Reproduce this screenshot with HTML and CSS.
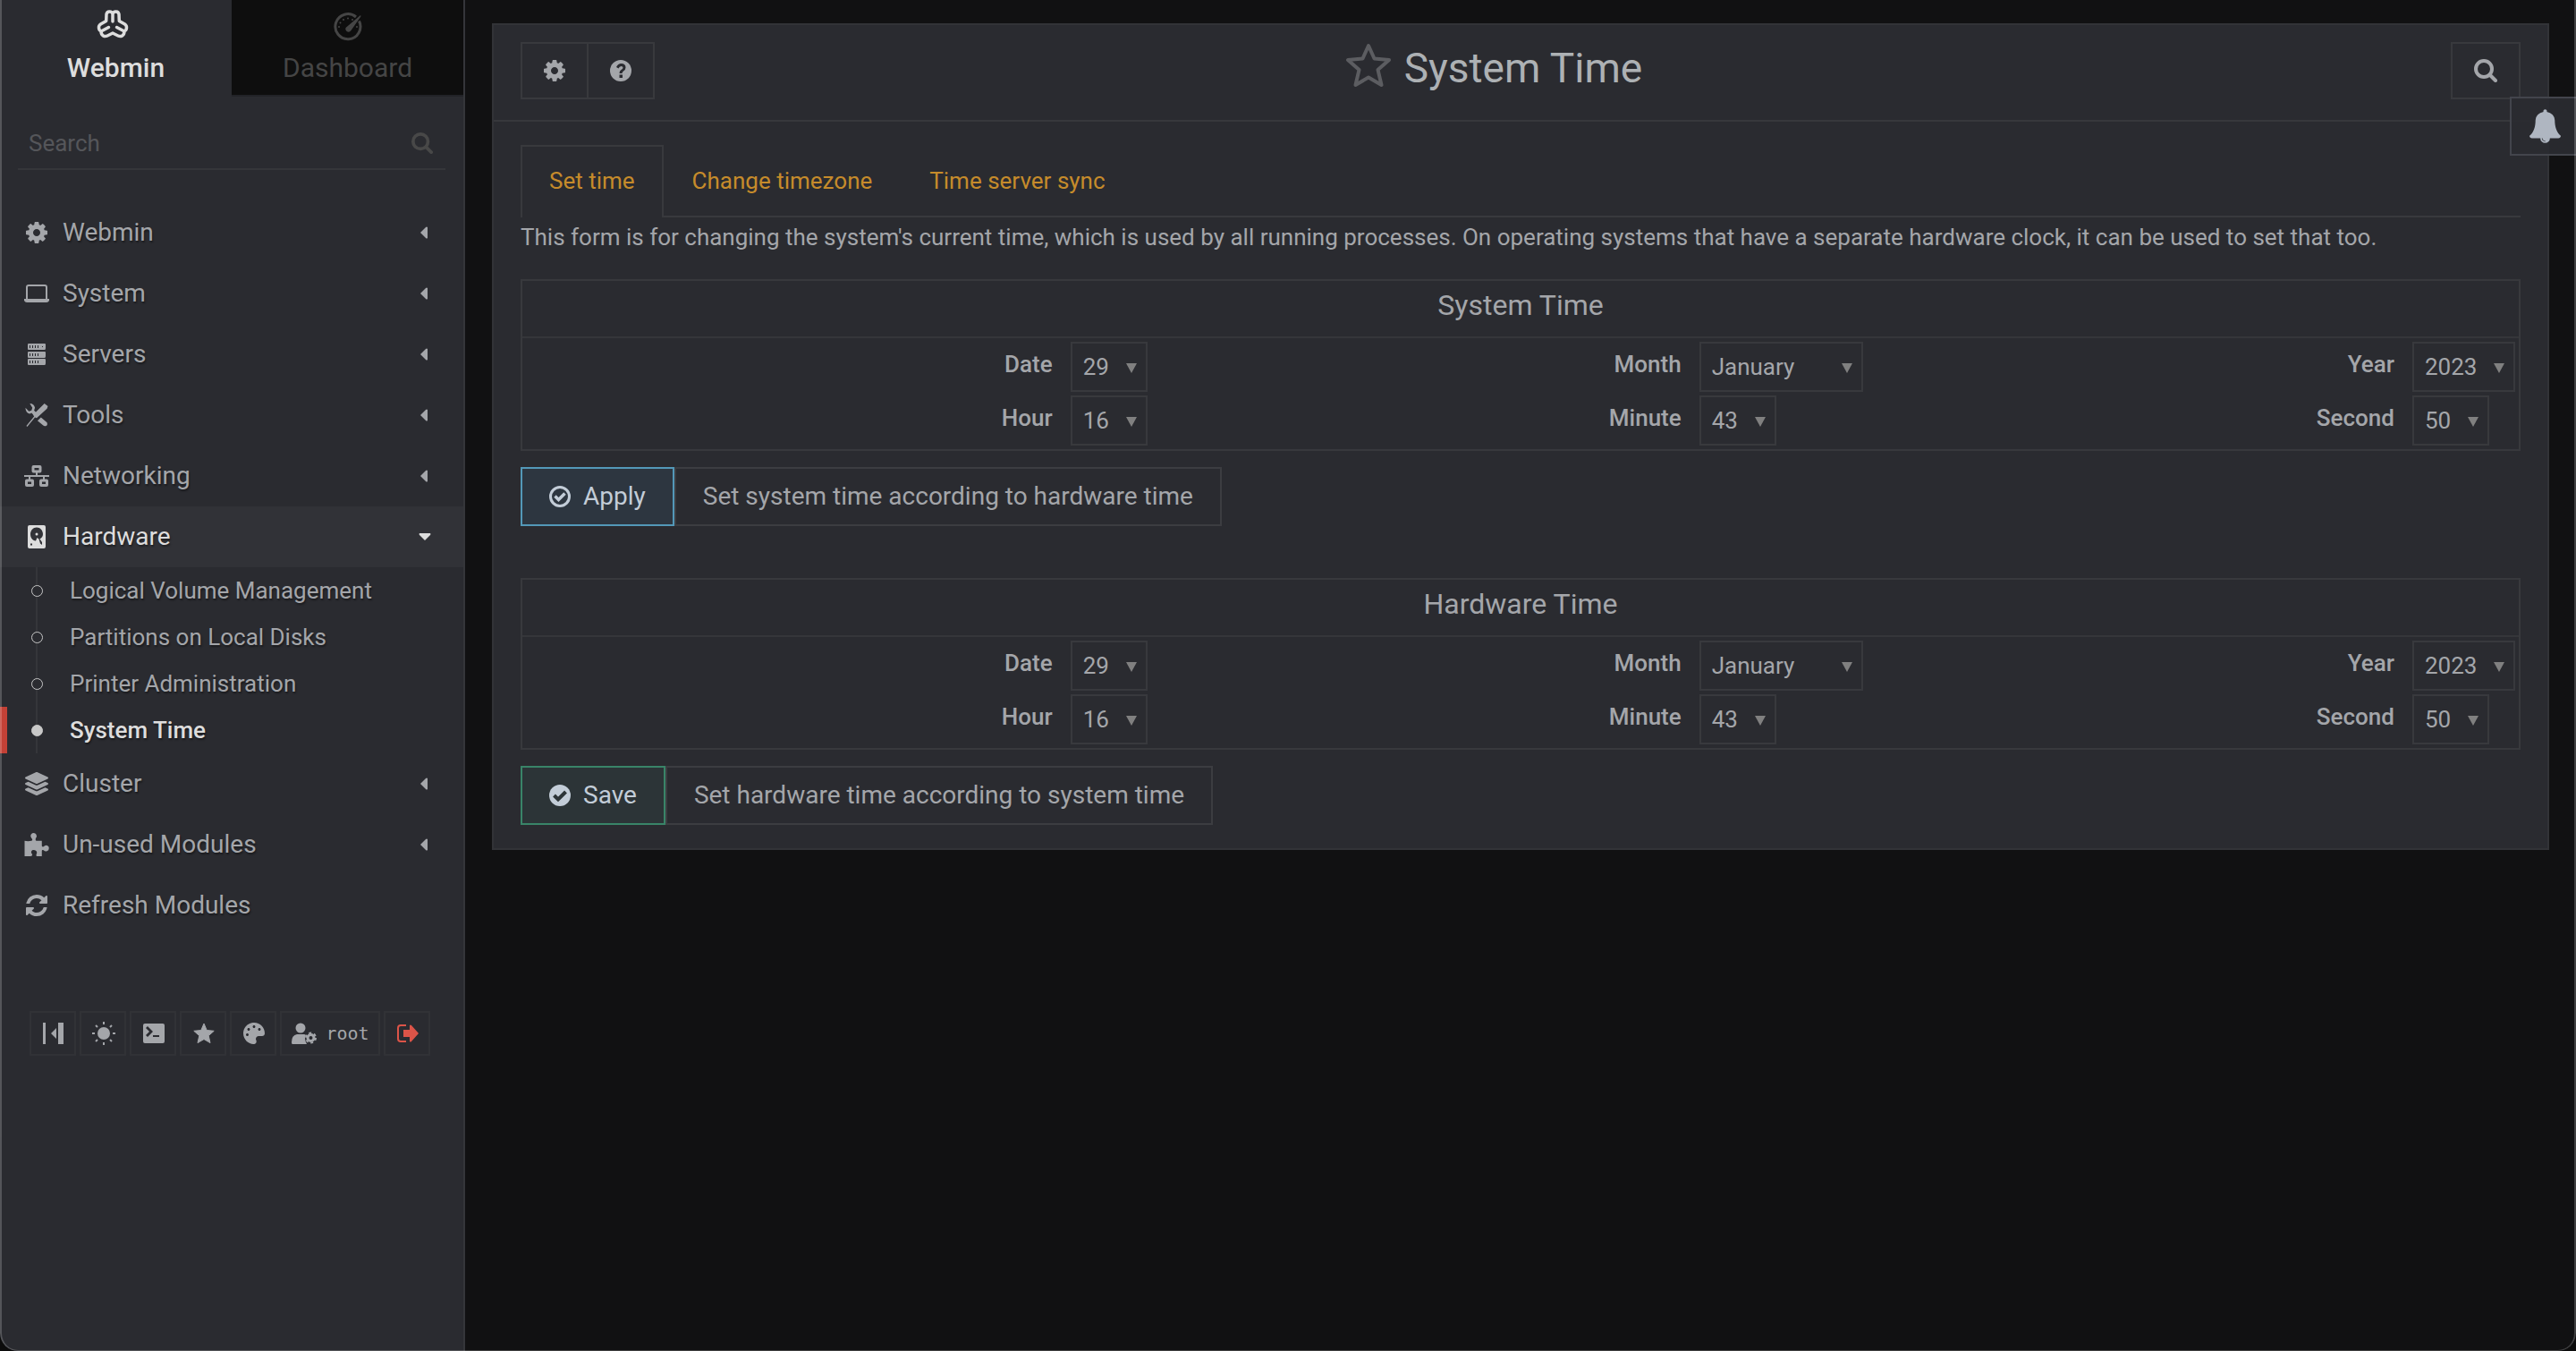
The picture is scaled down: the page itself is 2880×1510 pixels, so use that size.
FILE: index.html
```html
<!DOCTYPE html>
<html lang="en">
<head>
<meta charset="utf-8">
<title>System Time</title>
<link rel="stylesheet" href="styles.css">
</head>
<body>
<svg class="sprite" aria-hidden="true">
  <symbol id="cog" viewBox="0 0 1536 1536"><path d="M1024 768q0-106-75-181t-181-75-181 75-75 181 75 181 181 75 181-75 75-181zm512-109v222q0 12-8 23t-20 13l-185 28q-19 54-39 91 35 50 107 138 10 12 10 25t-9 23q-27 37-99 108t-94 71q-12 0-26-9l-138-108q-44 23-91 38-16 136-29 186-7 28-36 28H657q-14 0-24.500-8.500T621 1506l-28-184q-49-16-90-37l-141 107q-10 9-25 9-14 0-25-11-126-114-165-168-7-10-7-23 0-12 8-23 15-21 51-66.500t54-70.500q-27-50-41-99L29 913q-13-2-21-12.500T0 877V655q0-12 8-23t19-13l186-28q14-46 39-92-40-57-107-138-10-12-10-24 0-10 9-23 26-36 98.500-107.500T337 135q13 0 26 10l138 107q44-23 91-38 16-136 29-186 7-28 36-28h222q14 0 24.500 8.500T915 30l28 184q49 16 90 37l142-107q9-9 24-9 13 0 25 10 129 119 165 170 7 8 7 22 0 12-8 23-15 21-51 66.500t-54 70.500q26 50 41 98l183 28q13 2 21 12.500t8 23.500z"/></symbol>
  <symbol id="refresh" viewBox="0 0 1536 1536"><path d="M1511 928q0 5-1 7-64 268-268 434.500T764 1536q-146 0-282.500-55T238 1324l-129 129q-19 19-45 19t-45-19-19-45V960q0-26 19-45t45-19h448q26 0 45 19t19 45-19 45l-137 137q71 66 161 102t187 36q134 0 250-65t186-179q11-17 53-117 8-23 30-23h192q13 0 22.500 9.500t9.500 22.500zm25-800v448q0 26-19 45t-45 19h-448q-26 0-45-19t-19-45 19-45l138-138Q969 256 768 256q-134 0-250 65T332 500q-11 17-53 117-8 23-30 23H50q-13 0-22.500-9.500T18 608v-7q65-268 270-434.500T768 0q146 0 284 55.500T1297 212l130-129q19-19 45-19t45 19 19 45z"/></symbol>
  <symbol id="magnifier" viewBox="0 0 26 26"><g fill="none" stroke="currentColor"><circle cx="11" cy="11" r="9" stroke-width="4"/><path d="M18 18l6 6" stroke-width="4" stroke-linecap="round"/></g></symbol>
  <symbol id="laptop" viewBox="0 0 28 20"><path fill="none" stroke="currentColor" stroke-width="2" d="M3 16V3q0-2 2-2h18q2 0 2 2v13"/><path d="M0 16h28v2q-1 2-3 2H3q-2 0-3-2z"/></symbol>
  <symbol id="servers" viewBox="0 0 20 24"><path fill-rule="evenodd" d="M1 0h18q1 0 1 1v4q0 2-1 2H1Q0 7 0 6V1q0-1 1-1zm1 2v3h1V2zm3 0v3h1V2zm3 0v3h1V2zm3 0v3h1V2zm5 1v1h1V3zM1 9h18q1 0 1 1v4q0 2-1 2H1q-1 0-1-1v-5q0-1 1-1zm1 2v3h1v-3zm3 0v3h1v-3zm3 0v3h1v-3zm3 0v3h1v-3zM1 17h18q1 0 1 1v4q0 2-1 2H1q-1 0-1-1v-5q0-1 1-1zm1 2v3h1v-3zm3 0v3h1v-3zm3 0v3h1v-3zm3 0v3h1v-3z"/></symbol>
  <symbol id="tools" viewBox="0 0 26 27"><path d="M22 0l4 3-1 3L13 17l-2-1L2 27l-1-1 9-11-1-2z"/><path d="M14 20l4-4 7 6q1 3-1 4-2 1-4-1z"/><path d="M5 0q5 0 6 5l-1 3 4 4-3 3-4-4-2 1Q0 11 0 5l4 4 3-1 1-3z"/></symbol>
  <symbol id="network" viewBox="0 0 28 24"><path fill="none" stroke="currentColor" stroke-width="2" d="M0 12h28M14 7v5M6 12v4M22 12v4"/><g fill="none" stroke="currentColor" stroke-width="3"><rect x="10" y="1.500" width="8" height="5.500" rx=".5"/><rect x="2.500" y="17" width="7" height="5.500" rx=".5"/><rect x="18.500" y="17" width="7" height="5.500" rx=".5"/></g></symbol>
  <symbol id="disk" viewBox="0 0 20 26"><path fill-rule="evenodd" d="M2 0h16q2 0 2 2v22q0 2-2 2H2q-2 0-2-2V2Q0 0 2 0zm8 2.500C6 2.500 3 6 3 10s2 7 6 7.500L10.500 14l2 1.500 1.500 5 2 1.500v-3l-2.500-3.500C16 14 17 12 17 10c0-4-3-7.500-7-7.500zM3 20.500v2h2v-2z"/><circle cx="10" cy="10" r="1.500"/></symbol>
  <symbol id="layers" viewBox="0 0 512 512"><path d="M12.410 148.020l232.940 105.670c6.800 3.090 14.490 3.090 21.290 0l232.940-105.670c16.550-7.510 16.550-32.520 0-40.030L266.650 2.310a25.607 25.607 0 0 0-21.290 0L12.410 107.980c-16.550 7.510-16.550 32.530 0 40.040zm487.180 88.280l-58.090-26.330-161.640 73.270c-7.560 3.430-15.590 5.170-23.860 5.170s-16.290-1.740-23.860-5.170L70.510 209.970l-58.100 26.330c-16.550 7.500-16.550 32.500 0 40l232.940 105.590c6.800 3.080 14.490 3.080 21.290 0L499.590 276.300c16.550-7.500 16.550-32.500 0-40zm0 127.800l-57.870-26.230-161.860 73.370c-7.560 3.430-15.590 5.170-23.860 5.170s-16.290-1.740-23.860-5.170L70.290 337.870 12.410 364.100c-16.550 7.500-16.550 32.500 0 40l232.940 105.590c6.800 3.080 14.490 3.080 21.290 0L499.590 404.100c16.550-7.500 16.550-32.500 0-40z"/></symbol>
  <symbol id="puzzle" viewBox="0 0 28 27"><path d="M0 9q4 1 8 0 2-1 0-3-2-3 0-5 2-2 5 0 2 3 0 5-1 3 1 3h6v6q1 2 3 0 3-2 5 1 1 4-2 5-2 1-4-1-2-1-2 1v6h-6q-1-1 0-3 1-3-2-4-3-1-4 1-1 2 1 4 0 2-2 2H0z"/></symbol>
  <symbol id="star" viewBox="0 0 24 24"><path stroke="currentColor" stroke-width="1" stroke-linejoin="round" d="M12 1l3.200 7.500 8 .8-6 5.300 1.800 8L12 18.500 5 22.600l1.800-8-6-5.300 8-.8z"/></symbol>
  <symbol id="star-open" viewBox="0 0 52 52"><path fill="none" stroke="currentColor" stroke-width="4" stroke-linejoin="round" d="M26 4l6.500 14.500L49 20 36.500 31l4 17L26 39.500 11.500 48l4-17L3 20l16.500-1.500z"/></symbol>
  <symbol id="sun" viewBox="0 0 26 26"><circle cx="13" cy="13" r="7"/><path fill="none" stroke="currentColor" stroke-width="2" d="M13 0v3M13 23v3M0 13h3M23 13h3M4 4l2 2M20 20l2 2M4 22l2-2M20 6l2-2"/></symbol>
  <symbol id="terminal" viewBox="0 0 24 22"><path fill-rule="evenodd" d="M2 0h20q2 0 2 2v18q0 2-2 2H2q-2 0-2-2V2Q0 0 2 0zm1 5l4 4-4 4 2 2 6-6-6-6zm8 8v2h7v-2z"/></symbol>
  <symbol id="palette" viewBox="0 0 512 512"><path d="M204.300 5C104.900 24.400 24.800 104.300 5.200 203.400c-37 187 131.700 326.400 258.800 306.700 41.200-6.400 61.400-54.600 42.500-91.700-23.100-45.400 9.900-98.400 60.900-98.400h79.700c35.800 0 64.800-29.600 64.900-65.300C511.500 97.100 368.100-26.900 204.300 5zM96 320c-17.700 0-32-14.300-32-32s14.300-32 32-32 32 14.300 32 32-14.300 32-32 32zm32-128c-17.700 0-32-14.300-32-32s14.300-32 32-32 32 14.300 32 32-14.300 32-32 32zm128-64c-17.700 0-32-14.300-32-32s14.300-32 32-32 32 14.300 32 32-14.300 32-32 32zm128 64c-17.700 0-32-14.300-32-32s14.300-32 32-32 32 14.300 32 32-14.300 32-32 32z"/></symbol>
  <symbol id="collapse" viewBox="0 0 24 24"><path d="M0 0h3v24H0zM17 0h6v24h-6zM15 6v12l-6-6z"/></symbol>
  <symbol id="user-cog" viewBox="0 0 28 24"><circle cx="10" cy="6" r="5.500"/><path d="M6 13h8q1 0 2 1-1 2-1 4t2 6H1q-1 0-1-2 0-8 6-9z"/><circle cx="21.500" cy="17" r="3.500" fill="none" stroke="currentColor" stroke-width="3"/><circle cx="21.500" cy="17" r="5.500" fill="none" stroke="currentColor" stroke-width="2" stroke-dasharray="2.880 2.880"/></symbol>
  <symbol id="logout" viewBox="0 0 24 20"><path fill="none" stroke="currentColor" stroke-width="2" d="M10 1H4Q1 1 1 4v12q0 3 3 3h6"/><path d="M7 6h7V1q1-1 2 0l8 9-8 9q-1 1-2 0v-5H7z"/></symbol>
  <symbol id="help" viewBox="0 0 24 24"><circle cx="12" cy="12" r="12"/><path class="cut" d="M7 8q2-4 5.500-4 5 0 5 4.500 0 2.500-2.500 4-1.500 1-1.500 2.500h-3q0-3 2-4 2-1 2-2.500 0-1.500-2-1.500T9.500 9.500zM10.500 16.500h3.500V20h-3.500z"/></symbol>
  <symbol id="check-ring" viewBox="0 0 24 24"><circle cx="12" cy="12" r="10.500" fill="none" stroke="currentColor" stroke-width="3"/><path fill="none" stroke="currentColor" stroke-width="3.500" d="M6.500 11.500l4 4 7-7"/></symbol>
  <symbol id="check-disc" viewBox="0 0 24 24"><circle cx="12" cy="12" r="12"/><path class="cut-line" d="M5.500 12l4.500 4.500 8.500-8.500"/></symbol>
  <symbol id="bell" viewBox="64 0 1664 1792"><path d="M912 1696q0-16-16-16-59 0-101.500-42.500T752 1536q0-16-16-16t-16 16q0 73 51.500 124.500T896 1712q16 0 16-16zm816-288q0 52-38 90t-90 38h-448q0 106-75 181t-181 75-181-75-75-181H192q-52 0-90-38t-38-90q50-42 91-88t85-119.500 74.500-158.500 50-206T384 576q0-152 117-282.500T808 135q-8-19-8-39 0-40 28-68t68-28 68 28 28 68q0 20-8 39 190 28 307 158.500T1408 576q0 139 19.500 260t50 206 74.500 158.500 85 119.500 91 88z"/></symbol>
  <symbol id="webmin" viewBox="0 0 36 34"><path fill="none" stroke="currentColor" stroke-width="3.500" stroke-linejoin="round" stroke-linecap="round" d="M18 5.500C17 2 11.500 2 11 6l-.3 7.500L4.500 17C1.500 19 2 23.500 5 25c0 5 4 6.500 7 5l6-3 6 3c3 1.500 7 0 7-5 3-1.500 3.500-6 .5-8l-6.200-3.500L25 6c-.5-4-6-4-7-.5zM18 6v8M5 25l8.500-4.500M31 25l-8.500-4.500"/></symbol>
  <symbol id="gauge" viewBox="0 0 32 32"><g fill="none" stroke="currentColor" stroke-width="3"><path d="M25 5A14 14 0 1 0 28.500 9.500"/></g><path d="M30 3q1 1 0 2L19.500 20q-2 3-5 1-2-2-1-4z"/><g><circle cx="16" cy="6.500" r="1"/><circle cx="11" cy="8" r="1"/><circle cx="21" cy="8" r="1"/><circle cx="7.500" cy="11.500" r="1"/><circle cx="6" cy="16" r="1"/><circle cx="26" cy="16" r="1"/></g></symbol>
  <symbol id="caret-left" viewBox="0 0 8 14"><path d="M8 1v12q-1 1-2 0L0 7l6-6q1-1 2 0z"/></symbol>
  <symbol id="caret-down" viewBox="0 0 14 8"><path d="M1 0h12q1 1 0 2L7 8 1 2Q0 1 1 0z"/></symbol>
</svg>

<div class="app">
  <aside class="sidebar">
    <nav class="switch">
      <a class="switch-item is-active" href="#webmin-menu"><svg class="logo"><use href="#webmin"/></svg>Webmin</a>
      <a class="switch-item" href="#dashboard"><svg class="gauge"><use href="#gauge"/></svg>Dashboard</a>
    </nav>
    <div class="search">
      <input class="search-input" type="search" placeholder="Search" aria-label="Search">
      <svg class="search-icon"><use href="#magnifier"/></svg>
    </div>
    <ul class="menu">
      <li><a class="menu-link" href="#m1"><svg class="menu-icon"><use href="#cog"/></svg>Webmin<svg class="caret"><use href="#caret-left"/></svg></a></li>
      <li><a class="menu-link" href="#m2"><svg class="menu-icon"><use href="#laptop"/></svg>System<svg class="caret"><use href="#caret-left"/></svg></a></li>
      <li><a class="menu-link" href="#m3"><svg class="menu-icon"><use href="#servers"/></svg>Servers<svg class="caret"><use href="#caret-left"/></svg></a></li>
      <li><a class="menu-link" href="#m4"><svg class="menu-icon tall"><use href="#tools"/></svg>Tools<svg class="caret"><use href="#caret-left"/></svg></a></li>
      <li><a class="menu-link" href="#m5"><svg class="menu-icon"><use href="#network"/></svg>Networking<svg class="caret"><use href="#caret-left"/></svg></a></li>
      <li><a class="menu-link is-open" href="#m6"><svg class="menu-icon tall"><use href="#disk"/></svg>Hardware<svg class="caret down"><use href="#caret-down"/></svg></a>
        <ul class="submenu">
          <li><a class="sub-link" href="#s1">Logical Volume Management</a></li>
          <li><a class="sub-link" href="#s2">Partitions on Local Disks</a></li>
          <li><a class="sub-link" href="#s3">Printer Administration</a></li>
          <li><a class="sub-link is-current" href="#s4">System Time</a></li>
        </ul>
      </li>
      <li><a class="menu-link" href="#m7"><svg class="menu-icon tall"><use href="#layers"/></svg>Cluster<svg class="caret"><use href="#caret-left"/></svg></a></li>
      <li><a class="menu-link" href="#m8"><svg class="menu-icon tall"><use href="#puzzle"/></svg>Un-used Modules<svg class="caret"><use href="#caret-left"/></svg></a></li>
      <li><a class="menu-link" href="#m9"><svg class="menu-icon"><use href="#refresh"/></svg>Refresh Modules</a></li>
    </ul>
    <div class="tray">
      <button class="tray-btn" type="button" aria-label="Collapse menu"><svg class="icon"><use href="#collapse"/></svg></button>
      <button class="tray-btn" type="button" aria-label="Night mode"><svg class="icon big"><use href="#sun"/></svg></button>
      <button class="tray-btn" type="button" aria-label="Terminal"><svg class="icon"><use href="#terminal"/></svg></button>
      <button class="tray-btn" type="button" aria-label="Favorites"><svg class="icon"><use href="#star"/></svg></button>
      <button class="tray-btn" type="button" aria-label="Theme"><svg class="icon"><use href="#palette"/></svg></button>
      <button class="tray-btn user" type="button"><svg class="icon user-icon"><use href="#user-cog"/></svg>root</button>
      <button class="tray-btn exit" type="button" aria-label="Log out"><svg class="icon"><use href="#logout"/></svg></button>
    </div>
  </aside>

  <main class="content">
    <section class="panel">
      <header class="panel-head">
        <div class="btn-pair">
          <button class="head-btn" type="button" aria-label="Module config"><svg class="icon"><use href="#cog"/></svg></button>
          <button class="head-btn" type="button" aria-label="Help"><svg class="icon"><use href="#help"/></svg></button>
        </div>
        <h1 class="title"><svg class="title-star"><use href="#star-open"/></svg>System Time</h1>
        <button class="head-btn find" type="button" aria-label="Search"><svg class="icon big"><use href="#magnifier"/></svg></button>
      </header>
      <div class="panel-body">
        <nav class="tabs">
          <a class="tab is-active" href="#set-time">Set time</a>
          <a class="tab" href="#timezone">Change timezone</a>
          <a class="tab" href="#sync">Time server sync</a>
        </nav>
        <p class="intro">This form is for changing the system's current time, which is used by all running processes. On operating systems that have a separate hardware clock, it can be used to set that too.</p>

        <form class="clock">
          <table class="grid">
            <colgroup><col class="c1"><col class="c2"><col class="c3"><col class="c4"><col class="c5"><col class="c6"></colgroup>
            <thead><tr><th class="grid-title" colspan="6">System Time</th></tr></thead>
            <tbody>
              <tr>
                <td class="name"><label for="sd">Date</label></td><td class="value"><span class="pick"><select id="sd"><option>29</option></select></span></td>
                <td class="name"><label for="sm">Month</label></td><td class="value"><span class="pick"><select id="sm" class="month"><option>January</option></select></span></td>
                <td class="name"><label for="sy">Year</label></td><td class="value"><span class="pick"><select id="sy" class="year"><option>2023</option></select></span></td>
              </tr>
              <tr>
                <td class="name"><label for="sh">Hour</label></td><td class="value"><span class="pick"><select id="sh"><option>16</option></select></span></td>
                <td class="name"><label for="sn">Minute</label></td><td class="value"><span class="pick"><select id="sn"><option>43</option></select></span></td>
                <td class="name"><label for="ss">Second</label></td><td class="value"><span class="pick"><select id="ss"><option>50</option></select></span></td>
              </tr>
            </tbody>
          </table>
          <div class="actions">
            <button class="action apply" type="button"><svg class="icon"><use href="#check-ring"/></svg>Apply</button>
            <button class="action" type="button">Set system time according to hardware time</button>
          </div>
        </form>

        <form class="clock">
          <table class="grid">
            <colgroup><col class="c1"><col class="c2"><col class="c3"><col class="c4"><col class="c5"><col class="c6"></colgroup>
            <thead><tr><th class="grid-title" colspan="6">Hardware Time</th></tr></thead>
            <tbody>
              <tr>
                <td class="name"><label for="hd">Date</label></td><td class="value"><span class="pick"><select id="hd"><option>29</option></select></span></td>
                <td class="name"><label for="hm">Month</label></td><td class="value"><span class="pick"><select id="hm" class="month"><option>January</option></select></span></td>
                <td class="name"><label for="hy">Year</label></td><td class="value"><span class="pick"><select id="hy" class="year"><option>2023</option></select></span></td>
              </tr>
              <tr>
                <td class="name"><label for="hh">Hour</label></td><td class="value"><span class="pick"><select id="hh"><option>16</option></select></span></td>
                <td class="name"><label for="hn">Minute</label></td><td class="value"><span class="pick"><select id="hn"><option>43</option></select></span></td>
                <td class="name"><label for="hs">Second</label></td><td class="value"><span class="pick"><select id="hs"><option>50</option></select></span></td>
              </tr>
            </tbody>
          </table>
          <div class="actions">
            <button class="action save" type="button"><svg class="icon"><use href="#check-disc"/></svg>Save</button>
            <button class="action" type="button">Set hardware time according to system time</button>
          </div>
        </form>
      </div>
    </section>
  </main>
  <button class="notify" type="button" aria-label="Notifications"><svg class="bell"><use href="#bell"/></svg></button>
</div>
</body>
</html>
```
FILE: styles.css
```css
:root {
  --page: #111112;
  --surface: #2a2b30;
  --line: #38393d;
  --text: #a4a6aa;
  --bright: #dddddd;
}

* { box-sizing: border-box; }

html { background: #0c0c0c; }

body {
  margin: 0;
  min-height: 100vh;
  display: flex;
  color: var(--text);
  font: 26px/36px Roboto, "Liberation Sans", sans-serif;
}

a { color: inherit; text-decoration: none; }
ul { list-style: none; margin: 0; padding: 0; }
svg { display: block; flex: none; fill: currentColor; }
button, input, select { font: inherit; color: inherit; margin: 0; }
button { background: none; cursor: pointer; }

.sprite { position: absolute; width: 0; height: 0; }
.icon { width: 24px; height: 24px; }
.icon.big { width: 26px; height: 26px; }
.cut { fill: var(--surface); }
.cut-line { fill: none; stroke: #2c3437; stroke-width: 4px; }

.app {
  position: relative;
  flex: 1;
  display: flex;
  overflow: hidden;
  background: var(--page);
  border-radius: 0 0 20px 20px;
}

/* thin window edge painted over everything */
.app::after {
  content: "";
  position: absolute;
  inset: 0;
  border: 2px solid rgba(255, 255, 255, .2);
  border-top: 0;
  border-bottom-width: 1px;
  border-radius: 0 0 20px 20px;
  pointer-events: none;
}

/* sidebar */
.sidebar {
  flex: none;
  width: 520px;
  background: var(--surface);
  border-right: 2px solid #35363a;
}

.switch { display: grid; grid-template-columns: 1fr 1fr; height: 108px; }

.switch-item {
  display: flex;
  flex-direction: column;
  align-items: center;
  padding-top: 10px;
  gap: 14px;
  font-size: 30px;
  color: #454545;
  background: #0e0e0e;
  border-bottom: 2px solid #222327;
}

.switch-item.is-active {
  color: var(--bright);
  font-weight: 500;
  background: none;
  border-color: transparent;
}

.logo { width: 36px; height: 34px; margin-right: 8px; }
.gauge { width: 32px; height: 32px; margin: 4px 0 -2px; }

.search {
  display: flex;
  align-items: center;
  height: 66px;
  margin: 16px 20px 36px;
  padding: 8px 14px 0 12px;
  border-bottom: 2px solid #35363a;
  color: #484848;
}

.search-input {
  flex: 1;
  min-width: 0;
  padding: 0;
  border: 0;
  outline: 0;
  background: none;
}

.search-input::placeholder { color: #55565a; opacity: 1; }
.search-icon { width: 24px; height: 24px; }

.menu { text-shadow: 1px 2px 2px rgba(0, 0, 0, .4); }

.menu-link {
  display: flex;
  align-items: center;
  height: 68px;
  padding: 0 40px 0 27px;
  font-size: 28px;
}

.menu-icon { width: 28px; height: 24px; margin-right: 15px; }
.menu-icon.tall { height: 26px; }
.caret { width: 8px; height: 14px; margin-left: auto; }
.caret.down { width: 14px; height: 8px; margin-right: -4px; }
.is-open { color: var(--bright); background: #313237; }

.submenu { background: linear-gradient(#35363a, #35363a) 40px 0 / 2px 100% no-repeat; }

.sub-link {
  display: flex;
  align-items: center;
  height: 52px;
  padding-left: 35px;
}

.sub-link::before {
  content: "";
  width: 11px;
  height: 11px;
  margin-right: 30px;
  border: 1px solid #c8c8c8;
  border-radius: 50%;
  background: var(--surface);
}

.is-current {
  color: var(--bright);
  font-weight: 500;
  box-shadow: inset 8px 0 #c34136;
}

.is-current::before { background: #c8c8c8; }

.tray { display: flex; gap: 4px; padding: 84px 0 0 33px; }

.tray-btn {
  display: flex;
  align-items: center;
  justify-content: center;
  gap: 10px;
  width: 52px;
  height: 50px;
  padding: 0 0 0 1px;
  border: 2px solid #313236;
}

.tray-btn.user { width: 112px; font: 20px/24px "DejaVu Sans Mono", monospace; }
.user-icon { width: 28px; }
.exit { color: #dc5448; }

/* main panel */
.content { flex: 1; min-width: 0; padding: 26px 30px; }

.panel { background: var(--surface); border: 2px solid #323337; }

.panel-head {
  display: grid;
  grid-template-columns: 1fr auto 1fr;
  align-items: start;
  height: 108px;
  padding: 19px 30px;
  border-bottom: 2px solid #37383c;
}

.btn-pair { display: flex; }
.btn-pair .head-btn + .head-btn { margin-left: -2px; }

.head-btn {
  display: flex;
  align-items: center;
  justify-content: center;
  width: 76px;
  height: 64px;
  padding: 0;
  border: 2px solid var(--line);
}

.head-btn.find { width: 78px; justify-self: end; }

.title {
  display: flex;
  align-items: center;
  gap: 14px;
  margin: 0 60px 0 0;
  color: #adb1b4;
  font-size: 46px;
  line-height: 58px;
  font-weight: 400;
}

.title-star { width: 52px; height: 52px; margin-bottom: 6px; color: #5c5d61; }

.panel-body { padding: 26px 30px; }

.tabs { display: flex; height: 81px; border-bottom: 2px solid var(--line); }

.tab {
  display: flex;
  align-items: center;
  height: 81px;
  padding: 0 30px 4px;
  border: 2px solid transparent;
  border-bottom: 0;
  color: #c68b2b;
}

.tab.is-active { border-color: var(--line); background: var(--surface); }

.intro { margin: 4px 0 29px; }

.clock + .clock { margin-top: 58px; }

.grid {
  width: 100%;
  table-layout: fixed;
  border: 2px solid var(--line);
  border-spacing: 0;
}

.c1 { width: 27%; }
.c2 { width: 5%; }
.c3 { width: 26.5%; }
.c4 { width: 9%; }
.c6 { width: 129px; }

.grid-title {
  height: 64px;
  padding: 0 0 8px;
  font-size: 32px;
  font-weight: 400;
  border-bottom: 2px solid #35363a;
}

.grid td { height: 62px; padding: 4px 10px 2px; vertical-align: top; }
.grid tr + tr td { padding-top: 2px; }
.grid .value { padding-right: 0; }
.name { text-align: right; font-weight: 500; }
.name label { display: block; padding: 7px 0; }

.pick { position: relative; display: inline-flex; }

.pick::after {
  content: "";
  position: absolute;
  right: 12px;
  top: 24px;
  border: solid transparent;
  border-width: 11px 6px 0;
  border-top-color: #808080;
  pointer-events: none;
}

.pick select {
  appearance: none;
  width: 86px;
  height: 56px;
  padding: 0 12px;
  border: 2px solid var(--line);
  border-radius: 0;
  background: var(--surface);
}

.pick .month { width: 183px; }
.pick .year { width: 115px; }

.actions { display: flex; margin-top: 18px; }

.action {
  display: flex;
  align-items: center;
  gap: 14px;
  height: 66px;
  padding: 0 30px;
  border: 2px solid #3c3d41;
  font-size: 28px;
}

.apply { color: #c3cdd8; background: #2d3640; border-color: #5398b8; }
.save { color: #c3cdd8; background: #2c3437; border-color: #398468; }

.notify {
  position: absolute;
  top: 108px;
  right: 0;
  display: flex;
  align-items: center;
  width: 74px;
  height: 66px;
  padding: 0 0 0 20px;
  color: #afb6c1;
  background: #2a2b30f2;
  border: 2px solid #43454c;
  border-right: 0;
}

.bell { width: 35px; height: 38px; }
```
